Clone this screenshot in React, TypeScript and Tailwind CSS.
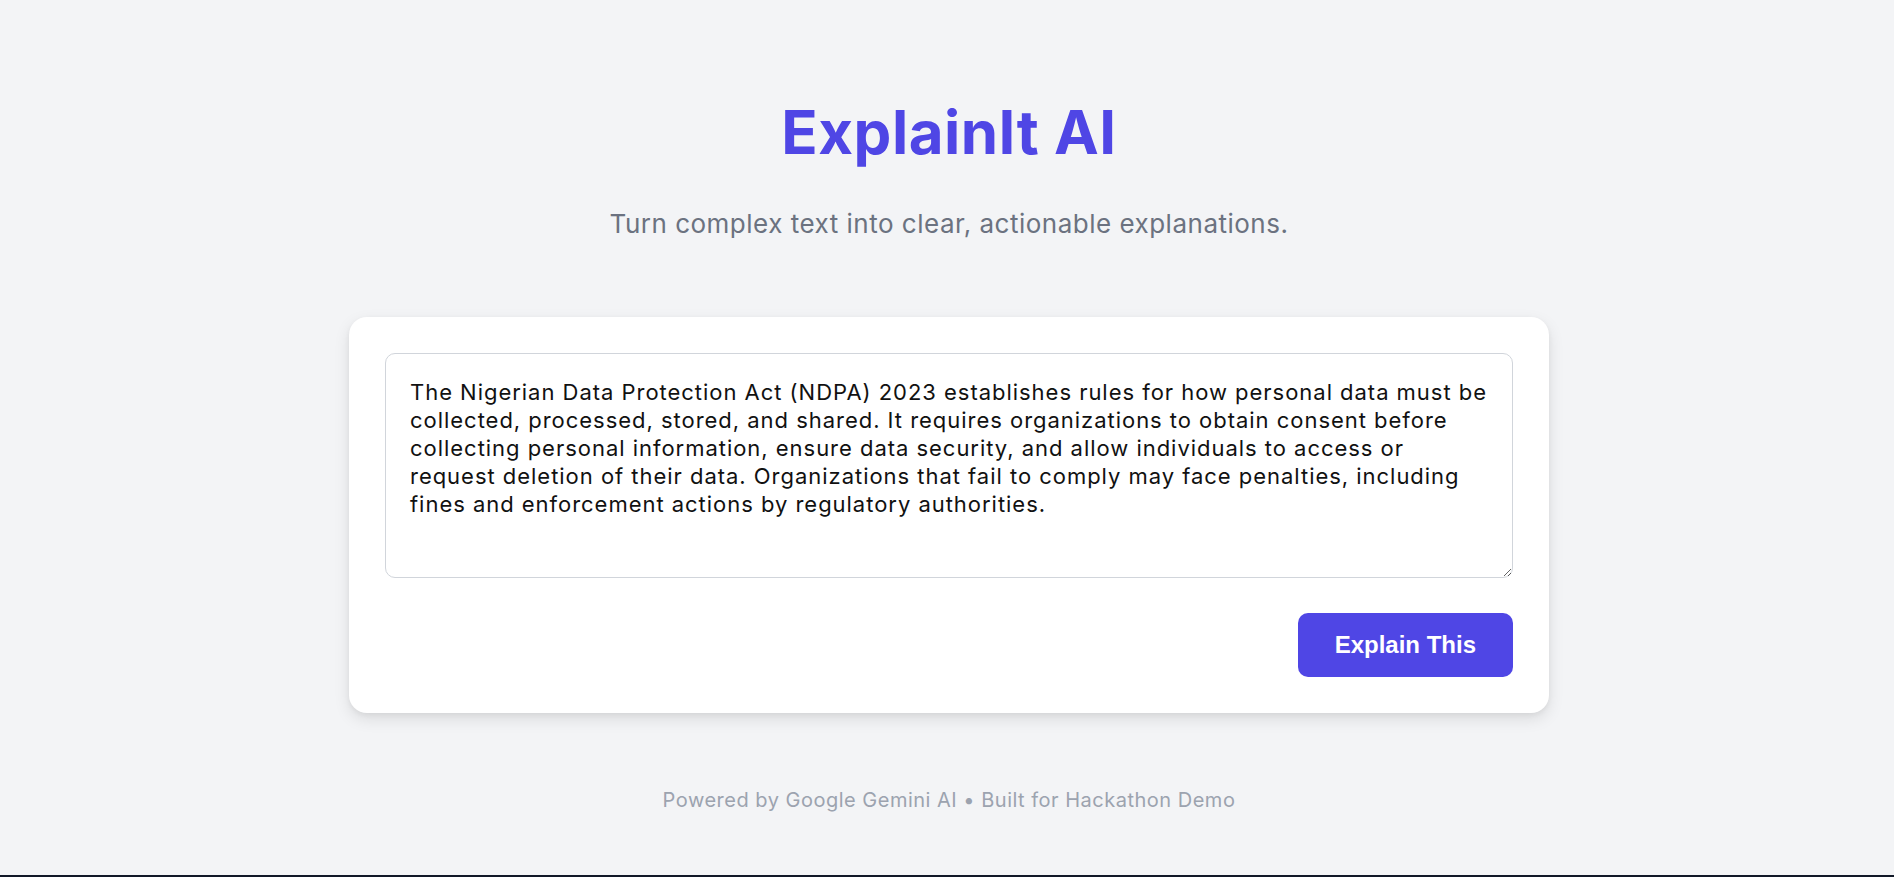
import React, { useState } from 'react';

const SAMPLE =
  'The Nigerian Data Protection Act (NDPA) 2023 establishes rules for how personal data must be collected, processed, stored, and shared. It requires organizations to obtain consent before collecting personal information, ensure data security, and allow individuals to access or request deletion of their data. Organizations that fail to comply may face penalties, including fines and enforcement actions by regulatory authorities.';

const App: React.FC = () => {
  const [text, setText] = useState(SAMPLE);

  return (
    <div className="min-h-[877px] bg-[#111827] font-['Inter',sans-serif]">
      <div className="h-[875px] bg-[#f3f4f6] flex flex-col items-center pl-1">
        {/* Header */}
        <h1 className="mt-[102px] text-[60px] leading-[60px] font-bold text-[#4f46e5] tracking-[0.5px]">
          ExplainIt AI
        </h1>
        <p className="mt-[46px] text-[26px] leading-[32px] tracking-[0.5px] text-[#6b7280]">
          Turn complex text into clear, actionable explanations.
        </p>

        {/* Input card */}
        <div className="mt-[77px] w-[1200px] bg-white rounded-[18px] shadow-[0_6px_16px_rgba(0,0,0,0.10),0_2px_5px_rgba(0,0,0,0.05)] p-9 flex flex-col">
          <textarea
            value={text}
            onChange={(e) => setText(e.target.value)}
            className="w-full h-[225px] border border-[#d1d5db] rounded-[10px] pl-6 pr-5 py-6 text-[22px] leading-[28px] tracking-[0.97px] text-[#111111] bg-white outline-none resize-y"
          />
          <div className="mt-[35px] flex justify-end">
            <button className="h-16 px-[37px] rounded-[10px] bg-[#4f46e5] text-white font-['Liberation_Sans',Arial,sans-serif] font-bold text-[24px]">
              Explain This
            </button>
          </div>
        </div>

        {/* Footer */}
        <p className="mt-[73px] text-[20px] leading-[28px] tracking-[0.5px] text-[#9ca3af]">
          Powered by Google Gemini AI • Built for Hackathon Demo
        </p>
      </div>
    </div>
  );
};

export default App;
